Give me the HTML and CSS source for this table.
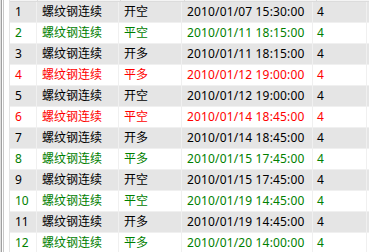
FILE: index.html
```html
<!DOCTYPE html>
<html lang="zh-CN">
<head>
<meta charset="utf-8">
<title>交易列表</title>
<link rel="stylesheet" href="styles.css">
</head>
<body>
<div class="frame">
  <div class="edge"></div>
  <div class="list">
    <div class="header">
      <div class="hc c1"></div><div class="hc c2"></div><div class="hc c3"></div><div class="hc c4"></div><div class="hc c5"></div><div class="hc fill"></div>
    </div>
    <div class="row odd black"><div class="c c1">1</div><div class="c c2">螺纹钢连续</div><div class="c c3">开空</div><div class="c c4">2010/01/07 15:30:00</div><div class="c c5">4</div><div class="c fill"></div></div>
    <div class="row even green"><div class="c c1">2</div><div class="c c2">螺纹钢连续</div><div class="c c3">平空</div><div class="c c4">2010/01/11 18:15:00</div><div class="c c5">4</div><div class="c fill"></div></div>
    <div class="row odd black"><div class="c c1">3</div><div class="c c2">螺纹钢连续</div><div class="c c3">开多</div><div class="c c4">2010/01/11 18:15:00</div><div class="c c5">4</div><div class="c fill"></div></div>
    <div class="row even red"><div class="c c1">4</div><div class="c c2">螺纹钢连续</div><div class="c c3">平多</div><div class="c c4">2010/01/12 19:00:00</div><div class="c c5">4</div><div class="c fill"></div></div>
    <div class="row odd black"><div class="c c1">5</div><div class="c c2">螺纹钢连续</div><div class="c c3">开空</div><div class="c c4">2010/01/12 19:00:00</div><div class="c c5">4</div><div class="c fill"></div></div>
    <div class="row even red"><div class="c c1">6</div><div class="c c2">螺纹钢连续</div><div class="c c3">平空</div><div class="c c4">2010/01/14 18:45:00</div><div class="c c5">4</div><div class="c fill"></div></div>
    <div class="row odd black"><div class="c c1">7</div><div class="c c2">螺纹钢连续</div><div class="c c3">开多</div><div class="c c4">2010/01/14 18:45:00</div><div class="c c5">4</div><div class="c fill"></div></div>
    <div class="row even green"><div class="c c1">8</div><div class="c c2">螺纹钢连续</div><div class="c c3">平多</div><div class="c c4">2010/01/15 17:45:00</div><div class="c c5">4</div><div class="c fill"></div></div>
    <div class="row odd black"><div class="c c1">9</div><div class="c c2">螺纹钢连续</div><div class="c c3">开空</div><div class="c c4">2010/01/15 17:45:00</div><div class="c c5">4</div><div class="c fill"></div></div>
    <div class="row even green"><div class="c c1">10</div><div class="c c2">螺纹钢连续</div><div class="c c3">平空</div><div class="c c4">2010/01/19 14:45:00</div><div class="c c5">4</div><div class="c fill"></div></div>
    <div class="row odd black"><div class="c c1">11</div><div class="c c2">螺纹钢连续</div><div class="c c3">开多</div><div class="c c4">2010/01/19 14:45:00</div><div class="c c5">4</div><div class="c fill"></div></div>
    <div class="row even green"><div class="c c1">12</div><div class="c c2">螺纹钢连续</div><div class="c c3">平多</div><div class="c c4">2010/01/20 14:00:00</div><div class="c c5">4</div><div class="c fill"></div></div>
  </div>
</div>
</body>
</html>
```
FILE: styles.css
```css
html, body {
  margin: 0;
  padding: 0;
  background: #ffffff;
  overflow: hidden;
}
body {
  width: 369px;
  height: 252px;
  font-family: "Noto Sans", "Noto Sans CJK SC", sans-serif;
  font-size: 12px;
}
.frame {
  display: flex;
  height: 252px;
  overflow: hidden;
}
.edge {
  flex: 0 0 9px;
  border-right: 1px solid #e4e4e4;
  background: linear-gradient(to right, #e0e0e0 0 1px, #a0a0a0 1px 2px, #ffffff 2px 3px, #c8c8c8 3px 4px, #ffffff 4px);
}
.list {
  flex: 1 1 auto;
  display: flex;
  flex-direction: column;
  min-width: 0;
}
.header {
  display: flex;
  height: 1px;
  flex: 0 0 1px;
  background: #f4f4f4;
  border-bottom: 1px solid #dcdcdc;
}
.hc {
  border-right: 1px solid #dcdcdc;
}
.row {
  display: flex;
  flex: 0 0 20px;
  height: 20px;
  border-bottom: 1px solid #f0f0f0;
}
.row.odd { background: #e5e5e5; }
.row.even { background: #ffffff; }
.black { color: #000000; }
.green { color: #008000; }
.red { color: #ff0000; }
.c {
  box-sizing: border-box;
  padding-left: 5px;
  line-height: 20px;
  white-space: nowrap;
  overflow: hidden;
  border-right: 1px solid #f0f0f0;
}
.c1 { flex: 0 0 27px; }
.c2 { flex: 0 0 82px; }
.c3 { flex: 0 0 63px; }
.c4 { flex: 0 0 131px; letter-spacing: 0.15px; }
.c5 { flex: 0 0 54px; padding-left: 4px; }
.fill { flex: 1 1 auto; }
```
